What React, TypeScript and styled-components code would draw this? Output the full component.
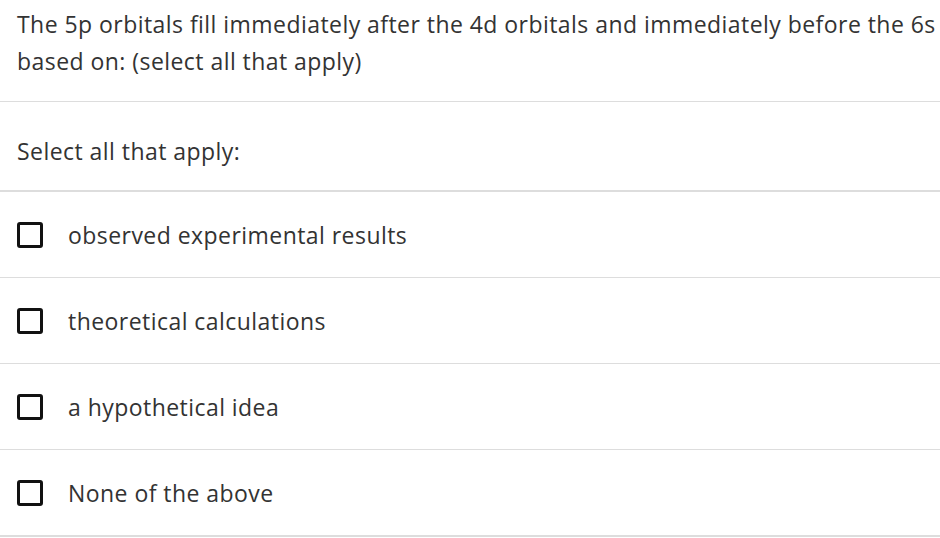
import React from 'react';
import styled, { createGlobalStyle } from 'styled-components';

const GlobalStyle = createGlobalStyle`
  body {
    margin: 0;
    background: #fff;
    font-family: "Open Sans", "Liberation Sans", sans-serif;
    color: #333;
  }
`;

const options = [
  'observed experimental results',
  'theoretical calculations',
  'a hypothetical idea',
  'None of the above',
];

export default function App() {
  const [checked, setChecked] = React.useState<boolean[]>(options.map(() => false));

  const toggle = (i: number) =>
    setChecked(prev => prev.map((c, j) => (j === i ? !c : c)));

  return (
    <Question>
      <GlobalStyle />
      <Prompt>
        The 5p orbitals fill immediately after the 4d orbitals and immediately before the 6s
        <br />
        based on: (select all that apply)
      </Prompt>
      <Instruction>Select all that apply:</Instruction>
      <OptionList>
        {options.map((label, i) => (
          <OptionRow key={label} last={i === options.length - 1} onClick={() => toggle(i)}>
            <CheckBox checked={checked[i]} />
            <OptionLabel>{label}</OptionLabel>
          </OptionRow>
        ))}
      </OptionList>
    </Question>
  );
}

const Question = styled.div`
  width: 940px;
  overflow: hidden;
  font-size: 23px;
  letter-spacing: 0.45px;
`;

const Prompt = styled.p`
  margin: 0;
  padding: 6px 0 21px 17px;
  line-height: 37px;
  white-space: nowrap;
  border-bottom: 1px solid #ddd;
`;

const Instruction = styled.div`
  padding: 31px 17px 21px;
  line-height: 36px;
  border-bottom: 2px solid #ddd;
`;

const OptionList = styled.div`
  display: flex;
  flex-direction: column;
`;

interface OptionRowProps {
  last: boolean;
}

const OptionRow = styled.label<OptionRowProps>`
  display: flex;
  align-items: center;
  gap: 25px;
  height: 85px;
  padding-left: 17px;
  border-bottom: ${props => (props.last ? '2px' : '1px')} solid #ddd;
  cursor: pointer;
`;

interface CheckBoxProps {
  checked: boolean;
}

const CheckBox = styled.span<CheckBoxProps>`
  box-sizing: border-box;
  width: 26px;
  height: 26px;
  border: 3px solid #111;
  border-radius: 3px;
  background: ${props => (props.checked ? '#111' : '#fff')};
  flex-shrink: 0;
`;

const OptionLabel = styled.span`
  line-height: 30px;
`;
